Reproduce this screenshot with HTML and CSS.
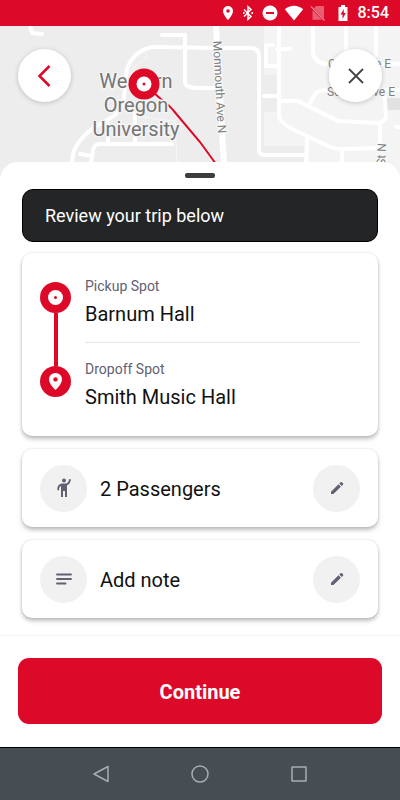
FILE: index.html
```
<!DOCTYPE html>
<html lang="en">
<head>
  <meta charset="UTF-8">
  <meta name="viewport" content="width=device-width, initial-scale=1.0">
  <title>Review your trip</title>
  <link rel="stylesheet" href="styles.css">
</head>
<body>
  <div class="status-bar">
    <svg width="12" height="16" viewBox="0 0 12 16"><path fill="#fff" fill-rule="evenodd" d="M6 1a5 5 0 0 0-5 5c0 4 5 9 5 9s5-5 5-9a5 5 0 0 0-5-5zm0 3.200a1.800 1.800 0 1 1 0 3.600 1.800 1.800 0 0 1 0-3.600z"/></svg>
    <svg width="16" height="16" viewBox="0 0 16 16"><path fill="none" stroke="#fff" stroke-width="1.500" d="M4 4.500l7 7-3 2.800V1.700l3 2.800-7 7"/><path fill="#fff" d="M3 7h1.500v2H3zM11.500 7H13v2h-1.500z"/></svg>
    <svg width="16" height="16" viewBox="0 0 16 16"><circle cx="8" cy="8" r="7.500" fill="#fff"/><path fill="#dc0a28" d="M4 7h8v2H4z"/></svg>
    <svg width="20" height="16" viewBox="0 0 20 16"><path fill="#fff" d="M10 15.500L.8 4.300C3.500 2 6.600.8 10 .8s6.500 1.200 9.200 3.500z"/></svg>
    <svg width="16" height="16" viewBox="0 0 16 16"><path fill="#fff" opacity=".35" d="M6 1h8v12.500L4 3.300zM2.500 5L12 14.800H2.500z"/><path stroke="#fff" opacity=".5" stroke-width="1.200" d="M1 1.500l13.500 14"/></svg>
    <svg class="battery" width="10" height="16" viewBox="0 0 10 16"><path fill="#fff" d="M3 0h4v2h2.500v14H.5V2H3z"/><path fill="#dc0a28" d="M5.800 4L2.500 9.500h2V14l3.300-6h-2z"/></svg>
    <span class="time">8:54</span>
  </div>

  <div class="map">
    <svg class="map-art" viewBox="0 26 400 152" preserveAspectRatio="xMidYMin slice">
      <rect y="26" width="400" height="152" fill="#ededed"/>
      <path fill="#f4f4f4" d="M264 26h136v152h-93v-32h-43v-34h15V75h-15z"/>
      <path fill="#e2e2e2" d="M387 98h13v12h-13z"/>
      <g class="roads">
        <path d="M30 26l2 7 10 1M162 35h23v48q1 5 15 5h13"/>
        <path d="M72 164c0-16 8-24 15-31s22-13 28-18q9-8 9-18l2-19c0-18 14-31 31-31l59 1h36q7 1 7 8v94q0 5 7 5h41"/>
        <path d="M80 154l12 2M91 164l2-14q1-6 7-6h72M108 120v24M135 114v30"/>
        <path d="M279 26v90q1 6 11 12l40 19q8 3 15 2l35-1M280 101h18l40 20 40 2q8-1 8-8l-2-25"/>
        <path d="M310 103l6-10q2-3 14-3h70M313 26v27q2 10 14 11h73M346 26v30M376 26v30"/>
        <path d="M273 45h-7v21h13M277 49h13M264 96h15M307 140l-1 25M342 150v15M380 123v25M396 127h4"/>
        <path class="avenue" d="M216 26l8 138"/>
      </g>
      <path fill="none" stroke="#f8f8f8" d="M130 75l5-9 12-8-1-6M137 116l20 3 18 2 2 44"/>
      <path fill="none" stroke="#dc0a28" stroke-width="2" d="M144 84l19 17q6 4 10 9l27 32 16 22"/>
      <g class="place">
        <text x="136" y="88">Western</text>
        <text x="136" y="112">Oregon</text>
        <text x="136" y="136">University</text>
      </g>
      <g class="street">
        <text transform="translate(213 41) rotate(87)">Monmouth Ave N</text>
        <text transform="translate(385 166) rotate(-87)">St N</text>
        <text x="328" y="68">Cl</text>
        <text x="391" y="68" text-anchor="end">Ave E</text>
        <text x="327" y="96">So</text>
        <text x="395" y="96" text-anchor="end">Ave E</text>
      </g>
      <circle cx="144" cy="84" r="15.500" fill="#dc0a28"/>
      <circle cx="144" cy="84" r="7.500" fill="#fff"/>
      <circle cx="144" cy="84" r="1.500" fill="#dc0a28"/>
    </svg>
    <div class="map-buttons">
      <button class="round-button" aria-label="Back">
        <svg width="24" height="24" viewBox="0 0 24 24"><path fill="none" stroke="#dc0a28" stroke-width="2.500" d="M16.500 2L6.500 12l10 10"/></svg>
      </button>
      <button class="round-button" aria-label="Close">
        <svg width="24" height="24" viewBox="0 0 24 24"><path fill="none" stroke="#444" stroke-width="1.800" d="M5 5l14 14M19 5L5 19"/></svg>
      </button>
    </div>
  </div>

  <div class="sheet">
    <div class="handle"></div>
    <h1 class="banner">Review your trip below</h1>

    <div class="card trip">
      <div class="route">
        <svg width="31" height="31" viewBox="0 0 31 31"><circle cx="15.500" cy="15.500" r="15.500" fill="#dc0a28"/><circle cx="15.500" cy="15.500" r="7.500" fill="#fff"/><circle cx="15.500" cy="15.500" r="1.500" fill="#dc0a28"/></svg>
        <div class="route-line"></div>
        <svg width="31" height="31" viewBox="0 0 31 31"><circle cx="15.500" cy="15.500" r="15.500" fill="#dc0a28"/><path fill="#fff" fill-rule="evenodd" d="M15.500 7A6.300 6.300 0 0 0 9 13.400c0 4.600 6.500 10.600 6.500 10.600S22 18 22 13.400A6.300 6.300 0 0 0 15.500 7zm0 4.200a2.200 2.200 0 1 1 0 4.400 2.200 2.200 0 0 1 0-4.400z"/></svg>
      </div>
      <div class="stops">
        <div class="stop">
          <div class="label">Pickup Spot</div>
          <div class="value">Barnum Hall</div>
        </div>
        <div class="stop">
          <div class="label">Dropoff Spot</div>
          <div class="value">Smith Music Hall</div>
        </div>
      </div>
    </div>

    <div class="card option">
      <span class="circle">
        <svg width="24" height="24" viewBox="0 0 24 24"><circle cx="12" cy="4.500" r="2" fill="#626071"/><path fill="none" stroke="#626071" stroke-width="1.800" stroke-linecap="round" d="M6.200 13.500c0-3 1.300-4.700 4-5h3.500c2.300-.3 3.700-1.700 4.200-4.500"/><path fill="#626071" d="M9 8h6v13h-2v-6h-2v6H9z"/></svg>
      </span>
      <span class="value">2 Passengers</span>
      <button class="circle" aria-label="Edit passengers">
        <svg width="16" height="16" viewBox="0 0 16 16"><path fill="#626071" d="M2 11.800L9.500 4.300l2.400 2.400L4.400 14H2zM10.300 3.500l1.300-1.200q.7-.6 1.400 0l1 1q.6.700 0 1.400l-1.300 1.200z"/></svg>
      </button>
    </div>

    <div class="card option">
      <span class="circle">
        <svg width="24" height="24" viewBox="0 0 24 24"><path fill="none" stroke="#626071" stroke-width="1.800" stroke-linecap="round" d="M5 7.500h14M5 12h14M5 16.500h8.500"/></svg>
      </span>
      <span class="value">Add note</span>
      <button class="circle" aria-label="Edit note">
        <svg width="16" height="16" viewBox="0 0 16 16"><path fill="#626071" d="M2 11.800L9.500 4.300l2.400 2.400L4.400 14H2zM10.300 3.500l1.300-1.200q.7-.6 1.400 0l1 1q.6.700 0 1.400l-1.300 1.200z"/></svg>
      </button>
    </div>
  </div>

  <div class="footer">
    <button class="continue">Continue</button>
  </div>

  <div class="nav-bar">
    <button aria-label="System back"><svg width="20" height="20" viewBox="0 0 20 20"><path d="M17 2.500v15L3 10z"/></svg></button>
    <button aria-label="Home"><svg width="20" height="20" viewBox="0 0 20 20"><circle cx="10" cy="10" r="8"/></svg></button>
    <button aria-label="Recent apps"><svg width="20" height="20" viewBox="0 0 20 20"><rect x="3" y="3" width="14" height="14"/></svg></button>
  </div>
</body>
</html>
```
FILE: styles.css
```
* {
  box-sizing: border-box;
}

body {
  margin: 0;
  min-height: 100vh;
  display: flex;
  flex-direction: column;
  background-color: white;
  color: #111;
  font-family: Roboto, sans-serif;
}

button {
  padding: 0;
  border: none;
  background: none;
  font-family: inherit;
  cursor: pointer;
}

svg {
  display: block;
}

.status-bar {
  display: flex;
  justify-content: flex-end;
  align-items: center;
  gap: 6px;
  height: 26px;
  padding-right: 11px;
  background-color: #dc0a28;
}

.battery {
  margin: 0 4px 0 6px;
}

.time {
  color: white;
  font-size: 16px;
  font-weight: 500;
  line-height: 28px;
}

/* map */
.map {
  position: relative;
  height: 152px;
}

.map-art {
  width: 100%;
  height: 100%;
}

.roads {
  fill: none;
  stroke: white;
  stroke-width: 4;
  stroke-linecap: round;
  stroke-linejoin: round;
}

.avenue {
  stroke-width: 6;
}

.place {
  fill: #757575;
  font-size: 20px;
  text-anchor: middle;
  stroke: #f4f4f4;
  stroke-width: 3px;
  paint-order: stroke;
}

.street {
  fill: #808080;
  font-size: 12px;
  stroke: #f8f8f8;
  stroke-width: 2px;
  paint-order: stroke;
}

.map-buttons {
  position: absolute;
  top: 23px;
  left: 18px;
  right: 18px;
  display: flex;
  justify-content: space-between;
}

.round-button {
  display: flex;
  justify-content: center;
  align-items: center;
  width: 53px;
  height: 53px;
  border-radius: 50%;
  background-color: white;
  box-shadow: 0 1px 5px rgba(0, 0, 0, 0.2);
}

/* bottom sheet */
.sheet {
  position: relative;
  flex: 1;
  margin-top: -16px;
  padding: 11px 22px 17px;
  border-radius: 18px 18px 0 0;
  background-color: white;
}

.handle {
  width: 30px;
  height: 5px;
  margin: 0 auto 11px;
  border-radius: 2px;
  background-color: #3c3c3e;
}

.banner {
  margin: 0 0 11px;
  padding: 0 22px;
  border: 1px solid black;
  border-radius: 11px;
  background-color: #242527;
  color: white;
  font-size: 18px;
  font-weight: 400;
  line-height: 51px;
}

.card {
  display: flex;
  margin-bottom: 13px;
  padding: 0 18px;
  border-radius: 10px;
  background-color: white;
  box-shadow: 0 3px 4px rgba(0, 0, 0, 0.25), 0 0 2px rgba(0, 0, 0, 0.15);
}

.card:last-child {
  margin-bottom: 0;
}

.trip {
  gap: 14px;
  padding-top: 19px;
  padding-bottom: 25px;
}

.route {
  display: flex;
  flex-direction: column;
  align-items: center;
  padding: 10px 0 14px;
}

.route-line {
  flex: 1;
  width: 4px;
  background-color: #dc0a28;
}

.stops {
  flex: 1;
}

.stop {
  padding-bottom: 14px;
}

.stop + .stop {
  padding-top: 12px;
  padding-bottom: 0;
  border-top: 1px solid #e6e6e6;
}

.label {
  color: #626071;
  font-size: 14px;
  line-height: 28px;
}

.value {
  font-size: 20px;
  line-height: 28px;
}

.option {
  align-items: center;
  gap: 13px;
  height: 78px;
}

.option .value {
  flex: 1;
  padding-top: 2px;
}

.circle {
  display: flex;
  justify-content: center;
  align-items: center;
  width: 47px;
  height: 47px;
  border-radius: 50%;
  background-color: #f1f1f1;
}

.footer {
  padding: 22px 18px 23px;
  border-top: 1px solid #f3f3f3;
}

.continue {
  width: 100%;
  height: 66px;
  padding-top: 2px;
  border-radius: 11px;
  background-color: #dc0a28;
  color: white;
  font-size: 20px;
  font-weight: 700;
}

.nav-bar {
  display: flex;
  justify-content: center;
  align-items: center;
  gap: 79px;
  height: 53px;
  border-top: 1px solid black;
  background-color: #464d53;
}

.nav-bar svg {
  fill: none;
  stroke: #a9adb0;
  stroke-width: 1.5;
  stroke-linejoin: round;
}
```
